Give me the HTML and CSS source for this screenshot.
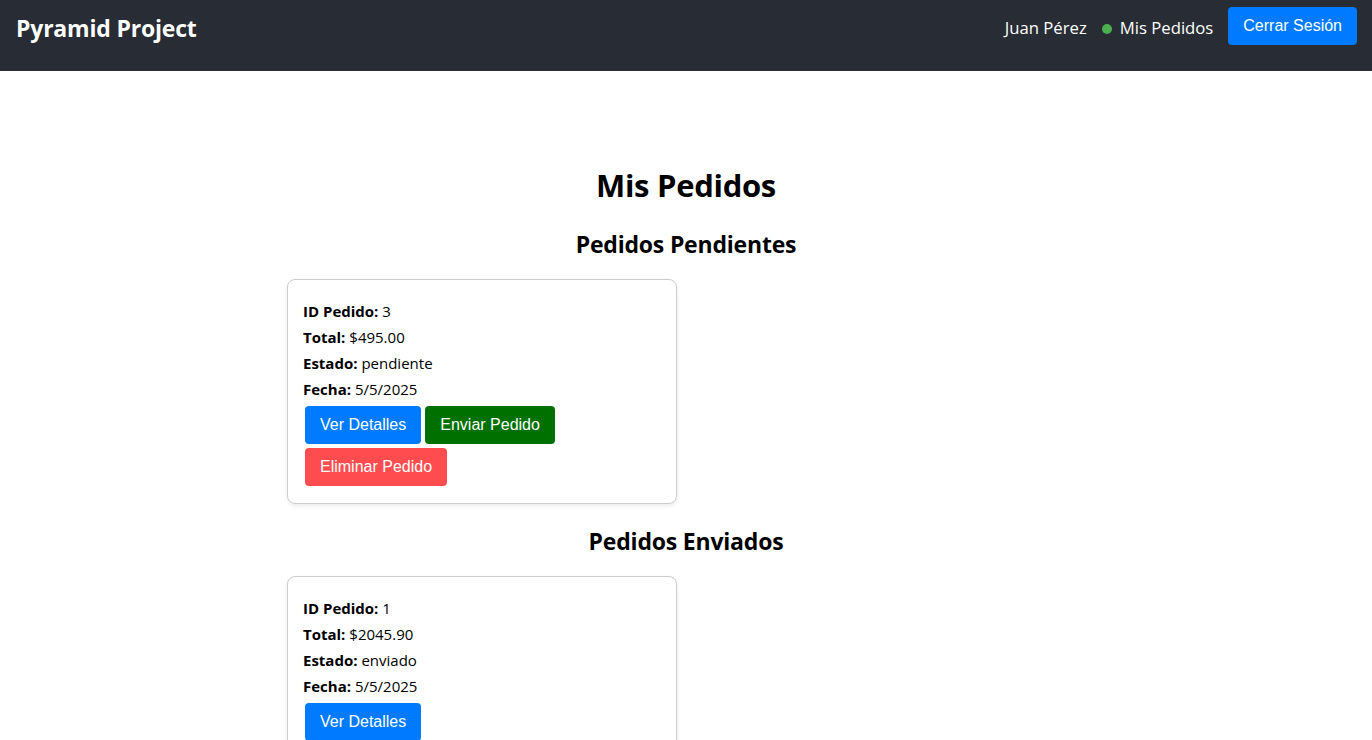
FILE: index.html
```html
<!DOCTYPE html>
<html lang="es">
<head>
<meta charset="utf-8">
<title>Mis Pedidos</title>
<link rel="stylesheet" href="styles.css">
</head>
<body>
<header class="topbar">
  <div class="brand">Pyramid Project</div>
  <nav class="nav">
    <span class="user">Juan Pérez</span>
    <span class="dot"></span>
    <a class="nav-link" href="#">Mis Pedidos</a>
    <button class="btn btn-blue btn-logout">Cerrar Sesión</button>
  </nav>
</header>
<main class="page">
  <h1 class="title">Mis Pedidos</h1>

  <h2 class="section">Pedidos Pendientes</h2>
  <div class="grid">
    <div class="card">
      <p class="row"><b>ID Pedido:</b> 3</p>
      <p class="row"><b>Total:</b> $495.00</p>
      <p class="row"><b>Estado:</b> pendiente</p>
      <p class="row"><b>Fecha:</b> 5/5/2025</p>
      <div class="actions">
        <button class="btn btn-blue">Ver Detalles</button>
        <button class="btn btn-green">Enviar Pedido</button>
        <button class="btn btn-red">Eliminar Pedido</button>
      </div>
    </div>
  </div>

  <h2 class="section section-sent">Pedidos Enviados</h2>
  <div class="grid">
    <div class="card">
      <p class="row"><b>ID Pedido:</b> 1</p>
      <p class="row"><b>Total:</b> $2045.90</p>
      <p class="row"><b>Estado:</b> enviado</p>
      <p class="row"><b>Fecha:</b> 5/5/2025</p>
      <div class="actions">
        <button class="btn btn-blue">Ver Detalles</button>
      </div>
    </div>
  </div>
</main>
</body>
</html>
```

FILE: styles.css
```css
html, body {
  margin: 0;
  padding: 0;
  background: #ffffff;
  color: #000000;
  font-family: "Open Sans", "Noto Sans", sans-serif;
}

.topbar {
  height: 71px;
  box-sizing: border-box;
  background: #282c34;
  color: #ffffff;
  display: flex;
  justify-content: space-between;
  align-items: flex-start;
  padding: 7px 15px 0 16px;
}

.brand {
  font-size: 23px;
  font-weight: 700;
  line-height: 42px;
  letter-spacing: -0.2px;
}

.nav {
  display: flex;
  align-items: flex-start;
}

.user,
.nav-link {
  font-size: 16.7px;
  line-height: 42px;
  color: #ffffff;
  text-decoration: none;
}

.dot {
  width: 10px;
  height: 10px;
  border-radius: 50%;
  background: #4caf50;
  margin: 17px 8px 0 15px;
}

.btn-logout {
  margin: 0 0 0 15px;
  line-height: 17px;
}

.btn {
  font-family: "Liberation Sans", Arial, sans-serif;
  font-size: 16px;
  line-height: 18px;
  padding: 10px 15px;
  border: none;
  border-radius: 4px;
  color: #ffffff;
  cursor: pointer;
}

.btn-blue { background: #007bff; }
.btn-green { background: #007000; }
.btn-red { background: #ff4d4f; }

.page {
  width: 800px;
  margin: 0 auto;
  padding-top: 72px;
}

.title {
  text-align: center;
  font-size: 31px;
  font-weight: 700;
  line-height: 43px;
  margin: 21px 0 21px;
  letter-spacing: -0.3px;
}

.section {
  text-align: center;
  font-size: 23px;
  font-weight: 700;
  line-height: 32px;
  margin: 20px 0 19px;
  letter-spacing: -0.2px;
}

.section-sent {
  margin-top: 21px;
}

.grid {
  display: grid;
  grid-template-columns: 1fr 1fr;
  gap: 20px;
  padding-left: 1px;
}

.card {
  border: 1px solid #cccccc;
  border-radius: 8px;
  padding: 16px 15px 15px;
  box-shadow: 0 2px 4px rgba(0, 0, 0, 0.08);
  font-size: 15px;
}

.row {
  margin: 5px 0;
  line-height: 21px;
}

.row:last-of-type {
  margin-bottom: 4px;
}

.row b {
  font-weight: 700;
}

.actions {
  display: flex;
  flex-wrap: wrap;
}

.actions .btn {
  margin: 2px;
}
```
